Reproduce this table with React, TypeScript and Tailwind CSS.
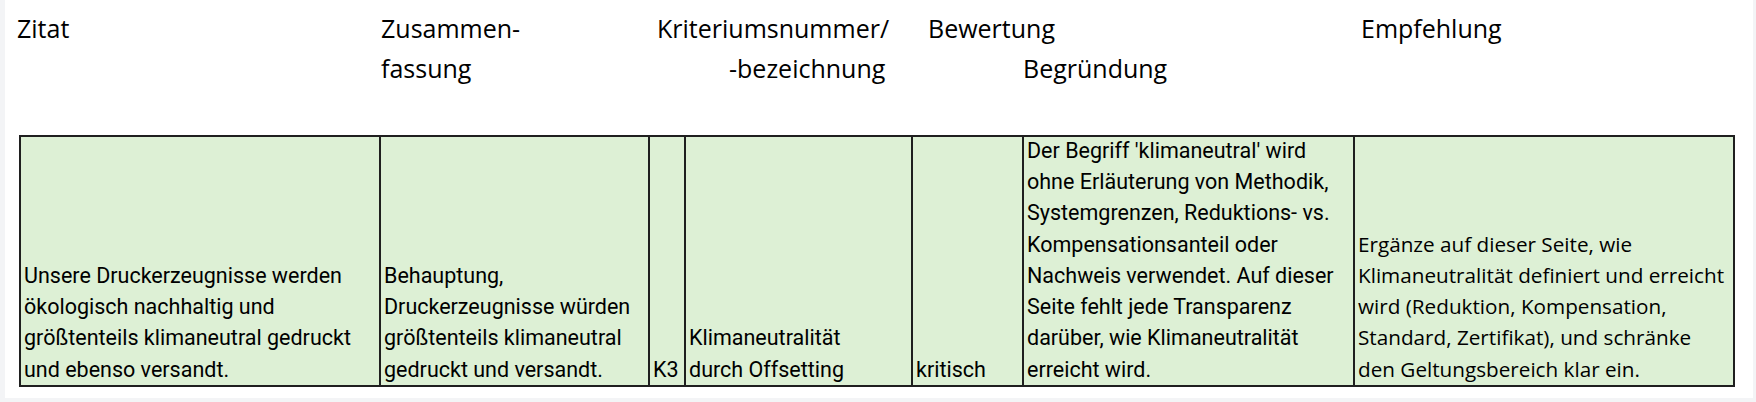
import React from "react";

const narrow = { fontFamily: "Roboto, 'Liberation Sans', sans-serif" };

function Lines({ lines, className }: { lines: string[]; className?: string }) {
  return (
    <div className={"flex flex-col justify-end h-full pl-[3px] whitespace-nowrap text-black " + (className ?? "")}>
      {lines.map((l, i) => (
        <div key={i}>{l}</div>
      ))}
    </div>
  );
}

export default function App() {
  return (
    <div className="w-[1756px] h-[402px] bg-[#f3f4f6] pl-[5px] pr-[3px] pb-[4px]">
      <div className="bg-white h-full w-full flex flex-col">
        {/* Header */}
        <div
          className="flex h-[135px] pt-[8px] text-[25px] leading-[40px] text-black"
          style={{ fontFamily: "'Open Sans', sans-serif" }}
        >
          <div className="w-[374px] pl-[12px]">Zitat</div>
          <div className="w-[268px] pl-[2px] flex flex-col">
            <span>Zusammen-</span>
            <span>fassung</span>
          </div>
          <div className="w-[276px] pl-[10px] flex flex-col whitespace-nowrap">
            <span>Kriteriumsnummer/</span>
            <span className="pl-[72px]">-bezeichnung</span>
          </div>
          <div className="w-[433px] pl-[5px] flex flex-col whitespace-nowrap">
            <span>Bewertung</span>
            <span className="pl-[95px]">Begründung</span>
          </div>
          <div className="pl-[5px]">Empfehlung</div>
        </div>
        {/* Table row */}
        <div
          className="ml-[14px] w-[1716px] h-[252px] flex border-2 border-[#1f1f1f] bg-[#ddf0d5] text-[21.5px] leading-[31.3px]"
          style={narrow}
        >
          <div className="w-[360px] shrink-0 border-r-2 border-[#1f1f1f]">
            <Lines lines={["Unsere Druckerzeugnisse werden", "ökologisch nachhaltig und", "größtenteils klimaneutral gedruckt", "und ebenso versandt."]} />
          </div>
          <div className="w-[269px] shrink-0 border-r-2 border-[#1f1f1f]">
            <Lines lines={["Behauptung,", "Druckerzeugnisse würden", "größtenteils klimaneutral", "gedruckt und versandt."]} />
          </div>
          <div className="w-[36px] shrink-0 border-r-2 border-[#1f1f1f]">
            <Lines lines={["K3"]} />
          </div>
          <div className="w-[227px] shrink-0 border-r-2 border-[#1f1f1f]">
            <Lines lines={["Klimaneutralität", "durch Offsetting"]} />
          </div>
          <div className="w-[111px] shrink-0 border-r-2 border-[#1f1f1f]">
            <Lines lines={["kritisch"]} />
          </div>
          <div className="w-[331px] shrink-0 border-r-2 border-[#1f1f1f]">
            <Lines
              lines={[
                "Der Begriff 'klimaneutral' wird",
                "ohne Erläuterung von Methodik,",
                "Systemgrenzen, Reduktions- vs.",
                "Kompensationsanteil oder",
                "Nachweis verwendet. Auf dieser",
                "Seite fehlt jede Transparenz",
                "darüber, wie Klimaneutralität",
                "erreicht wird.",
              ]}
            />
          </div>
          <div className="flex-1 min-w-0" style={{ fontFamily: "'Open Sans', sans-serif" }}>
            <Lines
              className="text-[20.7px]"
              lines={[
                "Ergänze auf dieser Seite, wie",
                "Klimaneutralität definiert und erreicht",
                "wird (Reduktion, Kompensation,",
                "Standard, Zertifikat), und schränke",
                "den Geltungsbereich klar ein.",
              ]}
            />
          </div>
        </div>
      </div>
    </div>
  );
}
